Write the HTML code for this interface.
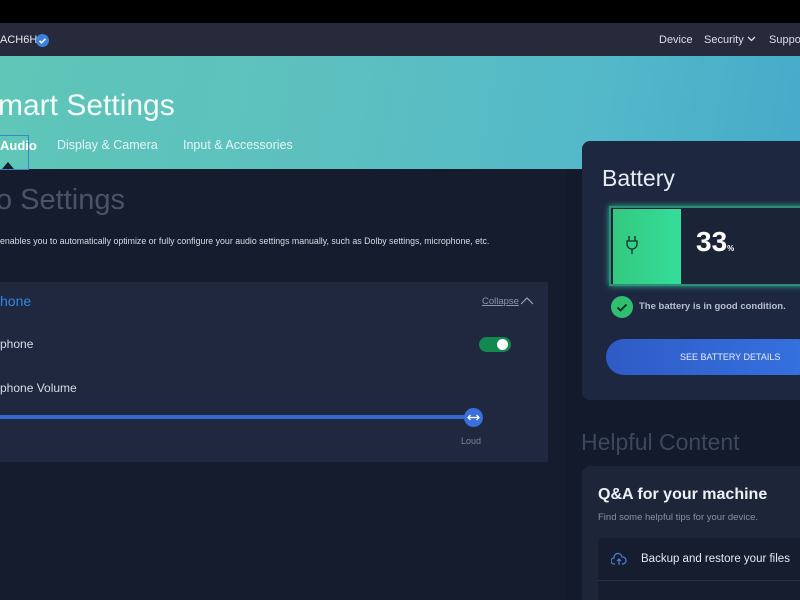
<!DOCTYPE html>
<html><head><meta charset="utf-8"><style>
*{margin:0;padding:0;box-sizing:border-box}
html,body{width:800px;height:600px;overflow:hidden}
body{background:#151c2e;font-family:"Liberation Sans",sans-serif;position:relative;color:#fff}
.a{position:absolute;white-space:nowrap}
</style></head><body>
<div class="a" style="left:0;top:0;width:800px;height:23px;background:#000"></div>
<div class="a" style="left:0;top:23px;width:800px;height:33px;background:#272a3a"></div>
<div class="a" style="left:0;top:34px;font-size:11px;color:#e8e8ee">ACH6H</div>
<div class="a" style="left:36px;top:34px;width:13px;height:13px;border-radius:50%;background:#3d7fe0"><svg width="13" height="13"><path d="M3.5 6.8l2 2 4-4" stroke="#fff" stroke-width="1.5" fill="none"/></svg></div>
<div class="a" style="left:659px;top:34px;font-size:11px;color:#dde">Device</div>
<div class="a" style="left:704px;top:34px;font-size:11px;color:#dde">Security <svg width="9" height="7"><path d="M1 1l3.5 3.5L8 1" stroke="#dde" stroke-width="1.3" fill="none"/></svg></div>
<div class="a" style="left:769px;top:34px;font-size:11px;color:#dde">Suppo</div>
<div class="a" style="left:0;top:56px;width:800px;height:113px;background:linear-gradient(100deg,#5fc6b8 0%,#5dc0bf 40%,#53b8c9 75%,#45abc9 100%)"></div>
<div class="a" style="left:-2px;top:89px;font-size:30px;color:#f4fbfa">mart Settings</div>
<div class="a" style="left:-2px;top:135px;width:31px;height:35px;border:1px solid #3b86c9"></div>
<div class="a" style="left:0;top:138px;font-size:13px;font-weight:bold;color:#fff">Audio</div>
<div class="a" style="left:2px;top:162px;width:0;height:0;border-left:6px solid transparent;border-right:6px solid transparent;border-bottom:7px solid #151c2e"></div>
<div class="a" style="left:57px;top:138px;font-size:12.5px;color:#e4f5f5">Display &amp; Camera</div>
<div class="a" style="left:183px;top:138px;font-size:12.5px;color:#e4f5f5">Input &amp; Accessories</div>
<div class="a" style="left:-4px;top:184px;font-size:29px;color:#4a5369">o Settings</div>
<div class="a" style="left:0;top:236px;font-size:8.8px;color:#d8dce6">enables you to automatically optimize or fully configure your audio settings manually, such as Dolby settings, microphone, etc.</div>
<div class="a" style="left:0;top:282px;width:548px;height:180px;background:#1f283f"></div>
<div class="a" style="left:0;top:293px;font-size:14px;color:#2f86e6">hone</div>
<div class="a" style="left:482px;top:296px;font-size:9.5px;color:#8d95a8;text-decoration:underline">Collapse</div>
<svg class="a" style="left:520px;top:296px" width="14" height="10"><path d="M1 8l6-6 6 6" stroke="#9aa2b4" stroke-width="1.2" fill="none"/></svg>
<div class="a" style="left:0;top:337px;font-size:12px;color:#d8dce6">phone</div>
<div class="a" style="left:479px;top:337px;width:32px;height:15px;border-radius:8px;background:#12894f"></div>
<div class="a" style="left:497px;top:339px;width:11px;height:11px;border-radius:50%;background:#fff"></div>
<div class="a" style="left:0;top:381px;font-size:12px;color:#d8dce6">phone Volume</div>
<div class="a" style="left:0;top:415px;width:470px;height:4px;background:#3468d2"></div>
<div class="a" style="left:464px;top:408px;width:19px;height:19px;border-radius:50%;background:#3a6fdc"><svg width="19" height="19"><path d="M4 9.5h11M6.5 7l-2.5 2.5 2.5 2.5M12.5 7l2.5 2.5-2.5 2.5" stroke="#fff" stroke-width="1.3" fill="none"/></svg></div>
<div class="a" style="left:461px;top:436px;font-size:9px;color:#7c8498">Loud</div>
<div class="a" style="left:566px;top:169px;width:234px;height:431px;background:#121a2b"></div>
<div class="a" style="left:582px;top:141px;width:230px;height:259px;border-radius:8px;background:#1e2740"></div>
<div class="a" style="left:602px;top:165px;font-size:23px;color:#e8ecf2">Battery</div>
<div class="a" style="left:609px;top:206px;width:200px;height:80px;border:2px solid #2a8f78;box-shadow:0 0 6px #2fb38f;background:#1b2437"></div>
<div class="a" style="left:613px;top:209px;width:68px;height:75px;background:linear-gradient(90deg,#33c97f,#35dd9a)"></div>
<svg class="a" style="left:624px;top:234px" width="16" height="22"><path d="M5 2v5M11 2v5M3 7h10v3a5 5 0 0 1-10 0zM8 15v5" stroke="#16302a" stroke-width="1.3" fill="none"/></svg>
<div class="a" style="left:696px;top:226px;font-size:28px;font-weight:bold;color:#fff">33<span style="font-size:8px">%</span></div>
<div class="a" style="left:611px;top:296px;width:22px;height:22px;border-radius:50%;background:#2fbf70"><svg width="22" height="22"><path d="M6.5 11.5l3 3 6-6" stroke="#10291e" stroke-width="1.8" fill="none"/></svg></div>
<div class="a" style="left:639px;top:301px;font-size:9.5px;font-weight:bold;color:#b8bfcc">The battery is in good condition.</div>
<div class="a" style="left:606px;top:339px;width:210px;height:36px;border-radius:18px;background:linear-gradient(90deg,#2f5bc6,#3572e0)"></div>
<div class="a" style="left:680px;top:352px;font-size:9px;color:#e8eefc">SEE BATTERY DETAILS</div>
<div class="a" style="left:581px;top:429px;font-size:23px;color:#3c4760">Helpful Content</div>
<div class="a" style="left:582px;top:466px;width:230px;height:140px;border-radius:8px;background:#1d2539"></div>
<div class="a" style="left:598px;top:486px;font-size:16px;font-weight:bold;color:#eef1f6">Q&amp;A for your machine</div>
<div class="a" style="left:598px;top:512px;font-size:9.5px;color:#8891a4">Find some helpful tips for your device.</div>
<div class="a" style="left:598px;top:538px;width:210px;height:70px;border-radius:6px;background:#161d2f"></div>
<div class="a" style="left:598px;top:580px;width:210px;height:1px;background:#283048"></div>
<svg class="a" style="left:611px;top:552px" width="16" height="14"><path d="M4 12H3a3 3 0 0 1 0-6 4 4 0 0 1 8-1 3 3 0 0 1 1 7h-1M8 13V7M6 9l2-2 2 2" stroke="#4d7ee0" stroke-width="1.2" fill="none"/></svg>
<div class="a" style="left:641px;top:553px;font-size:11.5px;color:#e6e9f0">Backup and restore your files</div>
</body></html>
